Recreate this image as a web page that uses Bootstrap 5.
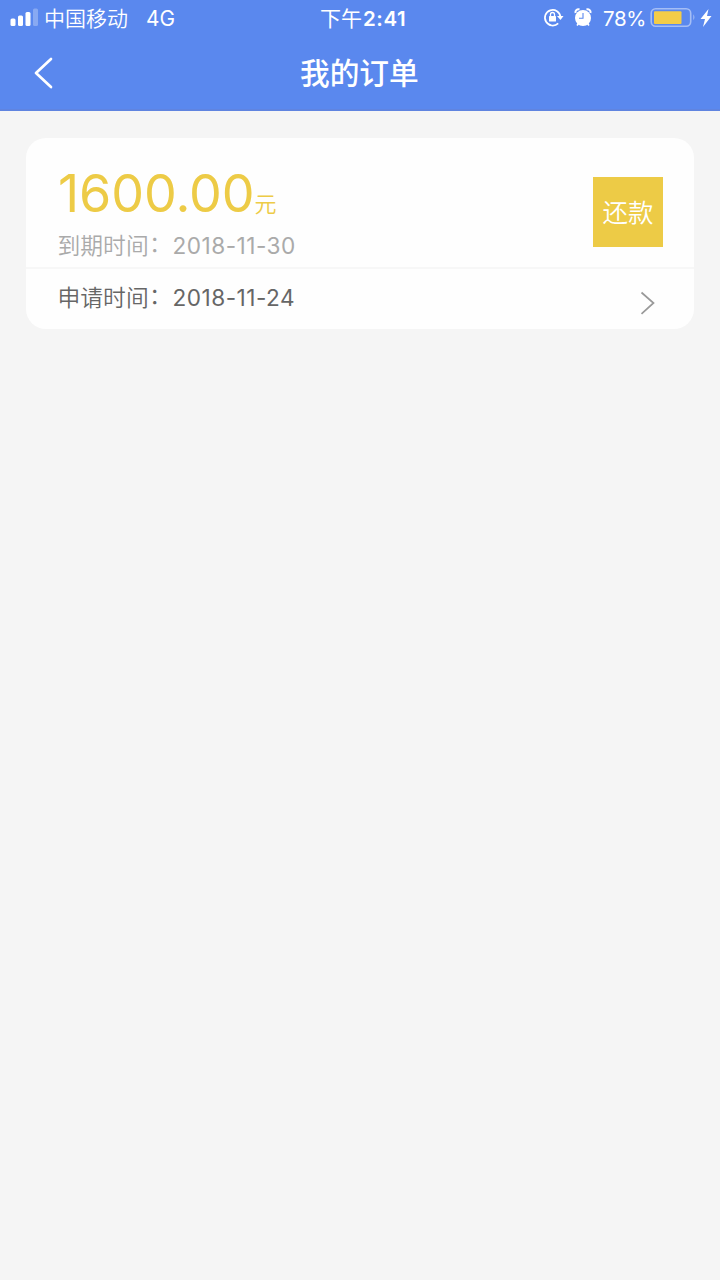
<!DOCTYPE html>
<html lang="zh-CN">
<head>
<meta charset="utf-8">
<meta name="viewport" content="width=device-width, initial-scale=1">
<title>我的订单</title>
<link href="https://cdn.jsdelivr.net/npm/bootstrap@5.3.0/dist/css/bootstrap.min.css" rel="stylesheet">
<style>
  body { background: #f5f5f5; font-family: Inter, "Noto Sans CJK SC", sans-serif; }
  svg { display: block; flex: none; }
  span, h1 { white-space: nowrap; }
  .app-top { height: 111px; background: #5a88ee; border-bottom: 2px solid #5f84e0; }
  .status { height: 36px; font-size: 21px; line-height: 38px; }
  .status-side { width: 320px; }
  .carrier { width: 102px; font-weight: 350; }
  .carrier, .network, .pct { padding-top: 2px; }
  .network { font-size: 20.8px; }
  .status-time { width: 87px; font-weight: 400; }
  .status-time b { font-weight: 600; font-size: 20.5px; letter-spacing: .6px; margin-left: 1px; }
  .pct { width: 47px; font-size: 20.5px; letter-spacing: -.35px; }
  .title-bar { height: 73px; padding-left: 34px; }
  .title-bar h1 { font-size: 29.7px; font-weight: 500; line-height: 75px; margin-left: 247px; padding-top: 2px; }
  .order { margin: 27px 26px 0; border-radius: 20px; height: 191px; background: #fefefe; }
  .order-main { height: 131px; padding: 27px 31px 0 32px; border-bottom: 2px solid #f7f7f7; }
  .amount { height: 58px; line-height: 58px; color: #edcb46; }
  .amount-num { font-size: 52px; letter-spacing: -.05px; }
  .amount-unit { font-size: 22px; font-weight: 350; }
  .line { font-size: 22.8px; line-height: 46px; height: 46px; }
  .due { color: #aaa; }
  .applied { color: #666; }
  .cn { width: 91.500px; font-weight: 350; margin-left: -.5px; }
  .colon { width: 23.500px; font-weight: 350; line-height: 42px; }
  .date { font-size: 22.6px; letter-spacing: .5px; }
  .repay { width: 70px; height: 70px; margin-top: 12px; background: #edcb46; font-size: 25.5px; font-weight: 350; line-height: 71px; }
  .order-foot { height: 60px; padding: 6px 39px 0 32px; }
  .chevron { margin-top: 16px; }
</style>
</head>
<body>
<header class="app-top text-white">
  <div class="status d-flex">
    <div class="status-side d-flex align-items-center">
      <svg width="44" height="36" fill="#fff"><rect x="10.500" y="18.500" width="5" height="7.500" rx="1.500"/><rect x="18" y="15.500" width="5" height="10.500" rx="1.500"/><rect x="25.500" y="12" width="5" height="14" rx="1.500"/><rect x="33" y="8.500" width="5" height="17.500" rx="1.500" opacity=".28"/></svg>
      <span class="carrier">中国移动</span><span class="network">4G</span>
    </div>
    <span class="status-time">下午<b>2:41</b></span>
    <div class="d-flex align-items-center ms-auto">
      <svg width="60" height="36" viewBox="0 0 60 36" fill="none" stroke="#fff" stroke-width="1.700">
        <path d="M15.200 23.300A7.800 7.800 0 1 1 17.500 17"/><path d="M14 16h6.500L17.500 20z" fill="#fff" stroke="none"/>
        <rect x="6" y="16" width="7" height="5.500" rx=".6" fill="#fff" stroke="none"/><path d="M7.500 16v-1.500a2 2 0 0 1 4 0V16" stroke-width="1.300"/>
        <circle cx="40" cy="18" r="8" fill="#fff" stroke="none"/>
        <path d="M32.500 13a3 3 0 0 1 4-3.500M47.500 13a3 3 0 0 0-4-3.500" stroke-width="2"/><path d="M35.500 23.500l-1.500 2M44.500 23.500l1.500 2"/>
        <path d="M40 13v5.200h-4" stroke="#5a88ee" stroke-width="1.100"/>
      </svg>
      <span class="pct">78%</span>
      <svg width="70" height="36" viewBox="0 0 70 36"><rect x="1.200" y="8.700" width="39.500" height="17.600" rx="4.500" fill="none" stroke="#a5bef5" stroke-width="1.600"/><rect x="4" y="11.200" width="27.500" height="12.800" rx="1" fill="#f3cc48"/><path d="M43.300 14.300q2.300 3 0 6z" fill="#a5bef5"/><path d="M58.500 9l-8 10h4.500l-2 8 8.500-11h-4.500z" fill="#fff"/></svg>
    </div>
  </div>
  <div class="title-bar d-flex align-items-center">
    <svg width="19" height="32" fill="none" stroke="#fff" stroke-width="2.700" stroke-linecap="round" stroke-linejoin="round"><path d="M17 2L2 16l15 14"/></svg>
    <h1 class="mb-0">我的订单</h1>
  </div>
</header>
<main class="order">
  <section class="order-main d-flex justify-content-between">
    <div>
      <div class="amount d-flex align-items-baseline"><span class="amount-num">1600.00</span><span class="amount-unit">元</span></div>
      <div class="line due d-flex"><span class="cn">到期时间</span><span class="colon">：</span><span class="date">2018-11-30</span></div>
    </div>
    <button class="repay border-0 p-0 text-white text-center" type="button">还款</button>
  </section>
  <section class="order-foot d-flex justify-content-between">
    <div class="line applied d-flex"><span class="cn">申请时间</span><span class="colon">：</span><span class="date">2018-11-24</span></div>
    <svg class="chevron" width="15" height="24" fill="none" stroke="#999" stroke-width="1.700"><path d="M1.500 1.500L13.500 12l-12 10.800"/></svg>
  </section>
</main>
<script src="https://cdn.jsdelivr.net/npm/bootstrap@5.3.0/dist/js/bootstrap.bundle.min.js"></script>
</body>
</html>
